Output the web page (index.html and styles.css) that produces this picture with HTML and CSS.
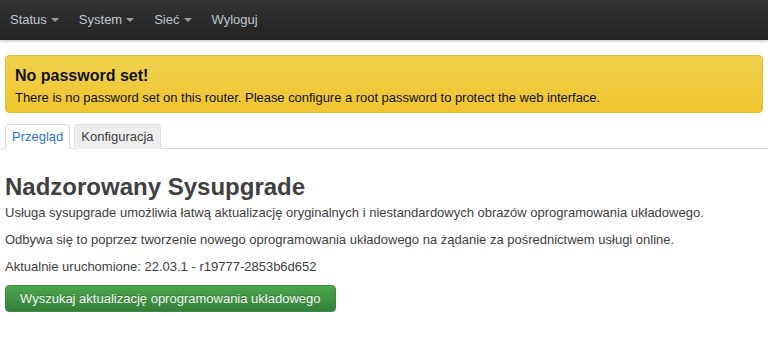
FILE: index.html
```html
<!DOCTYPE html>
<html lang="pl">
<head>
<meta charset="utf-8">
<title>Nadzorowany Sysupgrade</title>
<link rel="stylesheet" href="styles.css">
</head>
<body>
<header class="navbar">
  <ul class="nav">
    <li><a href="#">Status <span class="caret"></span></a></li>
    <li><a href="#">System <span class="caret"></span></a></li>
    <li><a href="#">Sieć <span class="caret"></span></a></li>
    <li><a href="#">Wyloguj</a></li>
  </ul>
</header>
<main class="main">
  <div class="alert">
    <h4 class="alert-title">No password set!</h4>
    <p class="alert-text">There is no password set on this router. Please configure a root password to protect the web interface.</p>
  </div>
  <ul class="tabs">
    <li class="tab active"><a href="#">Przegląd</a></li>
    <li class="tab"><a href="#">Konfiguracja</a></li>
  </ul>
  <h2 class="title">Nadzorowany Sysupgrade</h2>
  <p class="desc">Usługa sysupgrade umożliwia łatwą aktualizację oryginalnych i niestandardowych obrazów oprogramowania układowego.</p>
  <p class="desc">Odbywa się to poprzez tworzenie nowego oprogramowania układowego na żądanie za pośrednictwem usługi online.</p>
  <p class="desc">Aktualnie uruchomione: 22.03.1 - r19777-2853b6d652</p>
  <button class="btn">Wyszukaj aktualizację oprogramowania układowego</button>
</main>
</body>
</html>
```
FILE: styles.css
```css
* { box-sizing: border-box; }
html, body { margin: 0; padding: 0; }
body {
  font-family: "Liberation Sans", Arial, sans-serif;
  font-size: 13px;
  line-height: 18px;
  color: #404040;
  background: #fff;
}
.navbar {
  height: 40px;
  background: linear-gradient(to bottom, #333 0%, #222 100%);
  box-shadow: 0 1px 3px rgba(0,0,0,0.25);
}
.nav {
  list-style: none;
  margin: 0;
  padding: 0;
  display: flex;
}
.nav a {
  display: flex;
  align-items: center;
  height: 40px;
  padding: 0 10px;
  color: #bfc7cf;
  text-decoration: none;
  font-size: 13px;
}
.caret {
  display: inline-block;
  width: 0;
  height: 0;
  margin-left: 4px;
  border-left: 4px solid transparent;
  border-right: 4px solid transparent;
  border-top: 4px solid #9a9ea3;
}
.main {
  padding: 15px 5px 0;
}
.alert {
  background: linear-gradient(to bottom, #f0d24e 0%, #efc52f 100%);
  border: 1px solid #e8bd33;
  border-radius: 4px;
  padding: 10px 9px 5px;
  color: #111;
}
.alert-title {
  margin: 0 0 3px;
  font-size: 16px;
  line-height: 20px;
  font-weight: bold;
}
.alert-text {
  margin: 0;
  font-size: 13px;
  line-height: 18px;
  letter-spacing: -0.03px;
}
.tabs {
  list-style: none;
  margin: 11px -5px 0;
  padding: 0 5px;
  display: flex;
  gap: 4px;
  border-bottom: 1px solid #ddd;
}
.tab a {
  display: block;
  padding: 3px 6px;
  line-height: 18px;
  border: 1px solid #ddd;
  border-bottom: none;
  border-radius: 4px 4px 0 0;
  background: #eee;
  color: #404040;
  text-decoration: none;
  margin-bottom: -1px;
  height: 25px;
}
.tab.active a {
  background: #fff;
  color: #2f73c6;
}
.title {
  margin: 24px 0 4px;
  font-size: 24px;
  line-height: 27px;
  font-weight: bold;
  color: #404040;
}
.desc {
  margin: 0 0 9px;
}
.btn {
  margin-top: 0;
  font-family: inherit;
  font-size: 13px;
  line-height: 18px;
  padding: 4px 14px 4px;
  height: 27px;
  color: #f4f8f4;
  background: linear-gradient(to bottom, #4ca74f 0%, #337f38 100%);
  border: 1px solid #3b8a3f;
  border-radius: 4px;
  text-shadow: 0 -1px 0 rgba(0,0,0,0.2);
}
```
